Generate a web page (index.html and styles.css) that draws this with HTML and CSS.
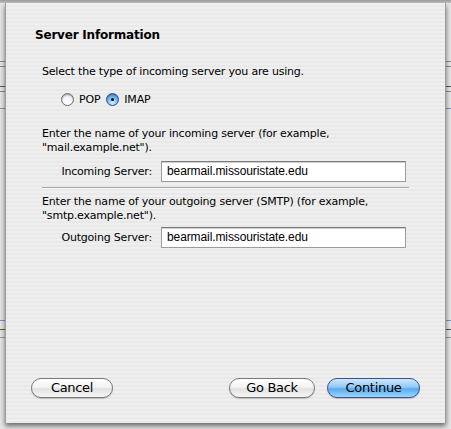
FILE: index.html
```html
<!DOCTYPE html>
<html>
<head>
<meta charset="utf-8">
<link rel="stylesheet" href="styles.css">
</head>
<body>
<div class="sheet">
  <h1 class="title">Server Information</h1>
  <div class="content">
    <p class="line first">Select the type of incoming server you are using.</p>
    <div class="radios">
      <span class="radio"></span><span class="rlabel">POP</span>
      <span class="radio on"></span><span class="rlabel">IMAP</span>
    </div>
    <p class="line para">Enter the name of your incoming server (for example,<br>"mail.example.net").</p>
    <div class="field">
      <span class="flabel">Incoming Server:</span>
      <span class="input">bearmail.missouristate.edu</span>
    </div>
    <div class="sep"></div>
    <p class="line para2">Enter the name of your outgoing server (SMTP) (for example,<br>"smtp.example.net").</p>
    <div class="field second">
      <span class="flabel">Outgoing Server:</span>
      <span class="input">bearmail.missouristate.edu</span>
    </div>
  </div>
  <div class="buttons">
    <span class="btn cancel">Cancel</span>
    <span class="spacer"></span>
    <span class="btn back">Go Back</span>
    <span class="btn primary">Continue</span>
  </div>
</div>
</body>
</html>
```
FILE: styles.css
```css
html, body { margin: 0; padding: 0; }
body {
  width: 451px;
  height: 429px;
  overflow: hidden;
  font-family: "DejaVu Sans", "Liberation Sans", sans-serif;
  color: #000;
  background:
    linear-gradient(to bottom, #9a9a9a 0, #c4c4c4 3px, transparent 3px),
    linear-gradient(to bottom,
      transparent 61px, #8c8c8c 61px, #8c8c8c 62px, transparent 62px,
      transparent 66px, #8c8c8c 66px, #8c8c8c 67px, transparent 67px,
      transparent 86px, #5a5a5a 86px, #5a5a5a 87px, transparent 87px,
      transparent 91px, #8c8c8c 91px, #8c8c8c 92px, transparent 92px,
      transparent 108px, #6b9bd6 108px, #6b9bd6 109px, transparent 109px,
      transparent 320px, #6b9bd6 320px, #6b9bd6 321px, transparent 321px,
      transparent 329px, #5a5a5a 329px, #5a5a5a 330px, transparent 330px,
      transparent 337px, #9a9a9a 337px, #9a9a9a 338px, transparent 338px),
    #e6e6e6;
  box-sizing: border-box;
  padding: 3px 5px 0 5px;
}
.sheet {
  width: 441px;
  height: 420px;
  box-sizing: border-box;
  border-left: 1px solid #9c9c9c;
  border-right: 1px solid #9c9c9c;
  background: repeating-linear-gradient(to bottom, #efefef 0, #efefef 2px, #e9e9e9 2px, #e9e9e9 4px);
  box-shadow: 0 3px 5px rgba(0,0,0,0.55);
  padding: 24px 0 0 29px;
  display: flex;
  flex-direction: column;
}
.title {
  margin: 0;
  font-size: 12px;
  font-weight: bold;
  line-height: 16px;
  letter-spacing: -0.2px;
}
.content {
  padding-left: 7px;
  width: 367px;
  font-size: 11px;
  letter-spacing: -0.2px;
}
.line { margin: 0; line-height: 14px; }
.first { margin-top: 22px; }
.radios {
  display: flex;
  align-items: center;
  margin-top: 13px;
  padding-left: 19px;
  height: 14px;
}
.radio {
  width: 13px;
  height: 13px;
  box-sizing: border-box;
  border-radius: 50%;
  border: 1px solid #6e6e6e;
  background: radial-gradient(circle at 50% 70%, #ffffff 0, #f4f4f4 50%, #c8c8c8 100%);
  box-shadow: inset 0 1px 1px rgba(0,0,0,0.25);
  position: relative;
}
.radio.on {
  border-color: #2f4f8e;
  background: radial-gradient(circle at 50% 80%, #c9f0ff 0, #7cc0f3 45%, #3a7fd0 100%);
}
.radio.on::after {
  content: "";
  position: absolute;
  left: 4px; top: 4px;
  width: 3px; height: 3px;
  border-radius: 50%;
  background: #000;
}
.rlabel { margin: 0 6px 0 5px; }
.para { margin-top: 21px; }
.field {
  display: flex;
  align-items: center;
  margin-top: 6px;
}
.field.second { margin-top: 4px; }
.flabel {
  width: 119px;
  text-align: right;
  padding-right: 9px;
  box-sizing: border-box;
}
.input {
  width: 245px;
  height: 21px;
  box-sizing: border-box;
  background: #fff;
  border: 1px solid #9b9b9b;
  border-top-color: #7a7a7a;
  box-shadow: inset 0 1px 0 #d0d0d0;
  font-family: "Liberation Sans", "DejaVu Sans", sans-serif;
  font-size: 12px;
  letter-spacing: -0.1px;
  line-height: 19px;
  padding-left: 5px;
}
.sep {
  height: 1px;
  background: #a8a8a8;
  margin-top: 5px;
  border-bottom: 1px solid #f8f8f8;
}
.para2 { margin-top: 6px; }
.buttons {
  margin-top: auto;
  margin-bottom: 25px;
  display: flex;
  align-items: center;
  margin-left: -4px;
  padding-right: 25px;
}
.spacer { flex: 1; }
.btn {
  height: 20px;
  box-sizing: border-box;
  border-radius: 10px;
  border: 1px solid #7a7a7a;
  background: linear-gradient(to bottom, #ffffff 0, #f3f3f3 45%, #e2e2e2 55%, #f6f6f6 100%);
  box-shadow: 0 1px 1px rgba(0,0,0,0.2);
  font-size: 13px;
  letter-spacing: -0.3px;
  line-height: 18px;
  text-align: center;
}
.cancel { width: 82px; }
.back { width: 86px; margin-right: 12px; }
.primary {
  width: 93px;
  border-color: #3f4f8f;
  background: linear-gradient(to bottom, #cce8fc 0, #93caf5 45%, #5aaaf0 55%, #9ad8ff 100%);
}
```
